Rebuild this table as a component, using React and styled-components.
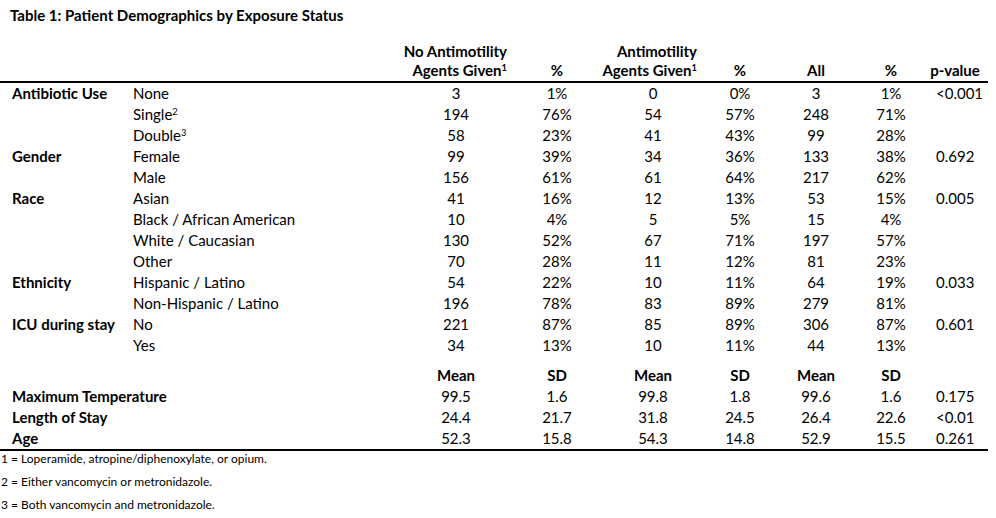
import React from "react";
import styled, { createGlobalStyle } from "styled-components";

const GlobalStyle = createGlobalStyle`
  html, body {
    margin: 0;
    padding: 0;
    background: #fff;
  }
  body {
    font-family: Lato, "Open Sans", "Liberation Sans", sans-serif;
    color: #000;
  }
  sup {
    font-size: 0.62em;
    line-height: 0;
    vertical-align: baseline;
    position: relative;
    top: -0.55em;
  }
`;

const COLS = "133px 263px 120px 82px 110px 64px 88px 62px 66px";

const Page = styled.div`
  width: 996px;
  height: 518px;
  overflow: hidden;
`;

const Title = styled.h1`
  margin: 0;
  height: 30px;
  line-height: 30px;
  padding-left: 10px;
  font-size: 15px;
  font-weight: 700;
`;

const Grid = styled.div`
  display: grid;
  grid-template-columns: ${COLS};
  width: 988px;
  font-size: 15px;
`;

const HeadRow = styled(Grid)`
  height: 51px;
  align-items: end;
  border-bottom: 2px solid #000;
  font-weight: 700;
  line-height: 19px;
`;

const HeadCell = styled.div`
  text-align: ${(p) => p.$align || "center"};
  padding-right: ${(p) => p.$pr || 0}px;
  padding-bottom: 1px;
  white-space: nowrap;
`;

const Row = styled(Grid)`
  height: ${(p) => p.$h || 21}px;
  align-items: end;
  line-height: 21px;
  font-weight: ${(p) => (p.$bold ? 700 : 400)};
`;

const Label = styled.div`
  grid-column: ${(p) => (p.$wide ? "1 / 3" : "auto")};
  padding-left: 12px;
  font-weight: 700;
  white-space: nowrap;
`;

const Sub = styled.div`
  text-align: left;
  white-space: nowrap;
`;

const Num = styled.div`
  text-align: center;
`;

const PVal = styled.div`
  text-align: left;
  padding-left: 14px;
`;

const Bottom = styled.div`
  width: 988px;
  border-top: 2px solid #000;
`;

const Notes = styled.div`
  display: flex;
  flex-direction: column;
  gap: 7px;
  padding-left: 1px;
  font-size: 12px;
  line-height: 16px;
`;

const groups = [
  {
    name: "Antibiotic Use",
    p: "<0.001",
    rows: [
      ["None", "", "3", "1%", "0", "0%", "3", "1%"],
      ["Single", "2", "194", "76%", "54", "57%", "248", "71%"],
      ["Double", "3", "58", "23%", "41", "43%", "99", "28%"],
    ],
  },
  {
    name: "Gender",
    p: "0.692",
    rows: [
      ["Female", "", "99", "39%", "34", "36%", "133", "38%"],
      ["Male", "", "156", "61%", "61", "64%", "217", "62%"],
    ],
  },
  {
    name: "Race",
    p: "0.005",
    rows: [
      ["Asian", "", "41", "16%", "12", "13%", "53", "15%"],
      ["Black / African American", "", "10", "4%", "5", "5%", "15", "4%"],
      ["White / Caucasian", "", "130", "52%", "67", "71%", "197", "57%"],
      ["Other", "", "70", "28%", "11", "12%", "81", "23%"],
    ],
  },
  {
    name: "Ethnicity",
    p: "0.033",
    rows: [
      ["Hispanic / Latino", "", "54", "22%", "10", "11%", "64", "19%"],
      ["Non-Hispanic / Latino", "", "196", "78%", "83", "89%", "279", "81%"],
    ],
  },
  {
    name: "ICU during stay",
    p: "0.601",
    rows: [
      ["No", "", "221", "87%", "85", "89%", "306", "87%"],
      ["Yes", "", "34", "13%", "10", "11%", "44", "13%"],
    ],
  },
];

const stats = [
  ["Maximum Temperature", "99.5", "1.6", "99.8", "1.8", "99.6", "1.6", "0.175"],
  ["Length of Stay", "24.4", "21.7", "31.8", "24.5", "26.4", "22.6", "<0.01"],
  ["Age", "52.3", "15.8", "54.3", "14.8", "52.9", "15.5", "0.261"],
];

const notes = [
  "1 = Loperamide, atropine/diphenoxylate, or opium.",
  "2 = Either vancomycin or metronidazole.",
  "3 = Both vancomycin and metronidazole.",
];

export default function App() {
  return (
    <Page>
      <GlobalStyle />
      <Title>Table 1: Patient Demographics by Exposure Status</Title>

      <HeadRow>
        <div />
        <div />
        <HeadCell $align="right" $pr={9}>
          No Antimotility
          <br />
          Agents Given<sup>1</sup>
        </HeadCell>
        <HeadCell>%</HeadCell>
        <HeadCell $align="right" $pr={11}>
          Antimotility
          <br />
          Agents Given<sup>1</sup>
        </HeadCell>
        <HeadCell>%</HeadCell>
        <HeadCell>All</HeadCell>
        <HeadCell>%</HeadCell>
        <HeadCell>p-value</HeadCell>
      </HeadRow>

      {groups.map((g) =>
        g.rows.map((r, i) => (
          <Row key={g.name + r[0]}>
            <Label>{i === 0 ? g.name : ""}</Label>
            <Sub>
              {r[0]}
              {r[1] && <sup>{r[1]}</sup>}
            </Sub>
            {r.slice(2).map((v, j) => (
              <Num key={j}>{v}</Num>
            ))}
            <PVal>{i === 0 ? g.p : ""}</PVal>
          </Row>
        ))
      )}

      <Row $h={30} $bold>
        <div />
        <div />
        {["Mean", "SD", "Mean", "SD", "Mean", "SD"].map((h, j) => (
          <Num key={j}>{h}</Num>
        ))}
        <div />
      </Row>

      {stats.map((s) => (
        <Row key={s[0]}>
          <Label $wide>{s[0]}</Label>
          {s.slice(1, 7).map((v, j) => (
            <Num key={j}>{v}</Num>
          ))}
          <PVal>{s[7]}</PVal>
        </Row>
      ))}

      <Bottom />
      <Notes>
        {notes.map((n) => (
          <div key={n}>{n}</div>
        ))}
      </Notes>
    </Page>
  );
}
